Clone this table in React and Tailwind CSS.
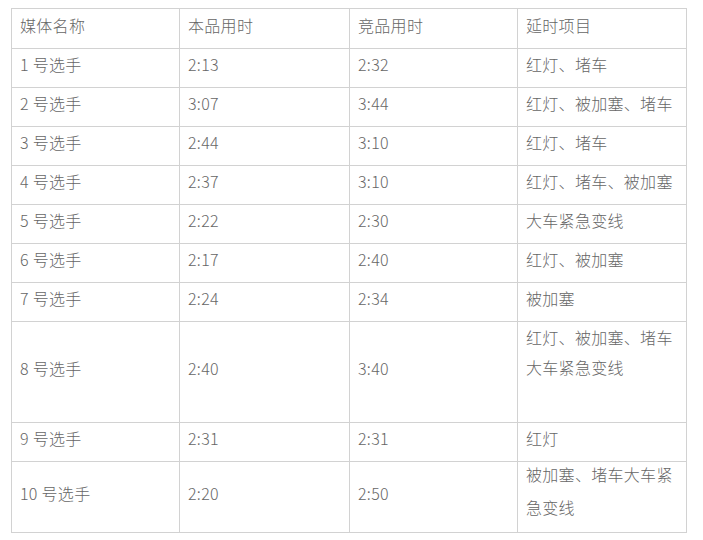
const rows = [
  { name: "1 号选手", a: "2:13", b: "2:32", items: ["红灯、堵车"] },
  { name: "2 号选手", a: "3:07", b: "3:44", items: ["红灯、被加塞、堵车"] },
  { name: "3 号选手", a: "2:44", b: "3:10", items: ["红灯、堵车"] },
  { name: "4 号选手", a: "2:37", b: "3:10", items: ["红灯、堵车、被加塞"] },
  { name: "5 号选手", a: "2:22", b: "2:30", items: ["大车紧急变线"] },
  { name: "6 号选手", a: "2:17", b: "2:40", items: ["红灯、被加塞"] },
  { name: "7 号选手", a: "2:24", b: "2:34", items: ["被加塞"] },
];

function Cell({ children, className = "" }) {
  return (
    <td className={`border border-[#d2d2d2] pl-[8px] pr-[6px] pt-0 pb-[8px] align-middle leading-[30px] ${className}`}>
      {children}
    </td>
  );
}

export default function App() {
  return (
    <div className="w-[703px] h-[540px] bg-white pt-[8px] pl-[11px]" style={{ fontFamily: '"Noto Sans CJK SC", "Noto Sans", sans-serif' }}>
      <table className="border-collapse table-fixed w-[675px] text-[16px] font-light tracking-[0.3px] text-[#666666]">
        <colgroup>
          <col className="w-[168px]" />
          <col className="w-[170px]" />
          <col className="w-[168px]" />
          <col className="w-[169px]" />
        </colgroup>
        <tbody>
          <tr className="h-[40px]">
            <Cell>媒体名称</Cell>
            <Cell>本品用时</Cell>
            <Cell>竞品用时</Cell>
            <Cell>延时项目</Cell>
          </tr>
          {rows.map((r) => (
            <tr key={r.name} className="h-[39px]">
              <Cell>{r.name}</Cell>
              <Cell>{r.a}</Cell>
              <Cell>{r.b}</Cell>
              <Cell>{r.items[0]}</Cell>
            </tr>
          ))}
          <tr className="h-[101px]">
            <Cell>8 号选手</Cell>
            <Cell>2:40</Cell>
            <Cell>3:40</Cell>
            <Cell className="align-top">
              <div>红灯、被加塞、堵车</div>
              <div>大车紧急变线</div>
              <div>&nbsp;</div>
            </Cell>
          </tr>
          <tr className="h-[39px]">
            <Cell>9 号选手</Cell>
            <Cell>2:31</Cell>
            <Cell>2:31</Cell>
            <Cell>红灯</Cell>
          </tr>
          <tr className="h-[67px]">
            <Cell>10 号选手</Cell>
            <Cell>2:20</Cell>
            <Cell>2:50</Cell>
            <Cell className="align-top">
              <div className="leading-[33px] -mt-[4px]">被加塞、堵车大车紧</div>
              <div className="leading-[33px]">急变线</div>
            </Cell>
          </tr>
        </tbody>
      </table>
    </div>
  );
}
